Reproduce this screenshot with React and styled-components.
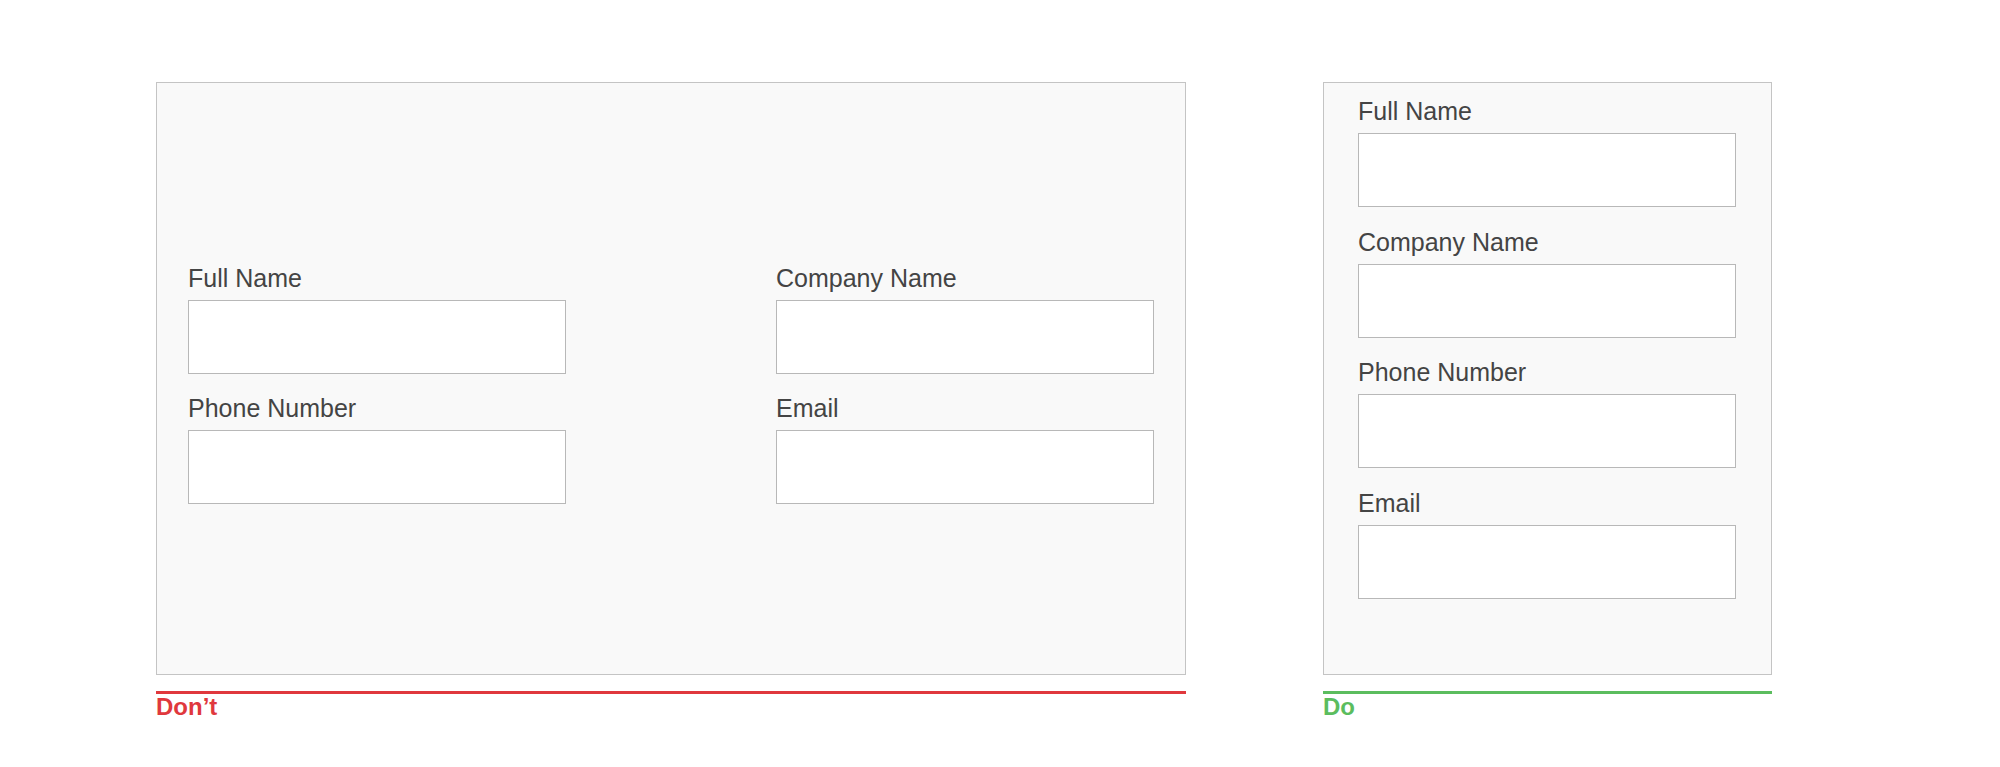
import React from "react";
import styled, { createGlobalStyle } from "styled-components";

const Global = createGlobalStyle`
  html, body { margin: 0; padding: 0; background: #ffffff; }
  body { font-family: "Liberation Sans", Arial, sans-serif; }
  * { box-sizing: border-box; }
`;

const Page = styled.div`
  display: flex;
  align-items: flex-start;
  gap: 137px;
  padding: 82px 0 0 156px;
  width: 2000px;
  height: 767px;
`;

const Example = styled.section`
  display: flex;
  flex-direction: column;
  width: ${(p) => p.$width}px;
`;

const Panel = styled.div`
  height: 593px;
  background: #f9f9f9;
  border: 1px solid #c4c4c4;
`;

const WideForm = styled.div`
  display: grid;
  grid-template-columns: 378px 378px;
  justify-content: space-between;
  row-gap: 20px;
  padding: 181px 31px 0 31px;
`;

const NarrowForm = styled.div`
  display: flex;
  flex-direction: column;
  gap: 20.5px;
  padding: 14px 35px 0 34px;
`;

const Field = styled.label`
  display: flex;
  flex-direction: column;
  gap: 8px;
`;

const Label = styled.span`
  font-size: 25px;
  line-height: 28px;
  color: #444444;
`;

const Input = styled.input`
  display: block;
  width: 378px;
  height: 74px;
  margin: 0;
  padding: 0 12px;
  background: #ffffff;
  border: 1px solid #b8b8b8;
  border-radius: 0;
  outline: none;
  font-family: inherit;
  font-size: 24px;
`;

const Rule = styled.div`
  height: 3px;
  margin-top: 16px;
  background: ${(p) => p.$color};
`;

const Caption = styled.div`
  font-size: 24px;
  line-height: 26px;
  font-weight: 700;
  color: ${(p) => p.$color};
`;

const RED = "#e0383d";
const GREEN = "#5bbd5e";

function FormField({ label }) {
  return (
    <Field>
      <Label>{label}</Label>
      <Input type="text" />
    </Field>
  );
}

export default function App() {
  return (
    <>
      <Global />
      <Page>
        <Example $width={1030}>
          <Panel>
            <WideForm>
              <FormField label="Full Name" />
              <FormField label="Company Name" />
              <FormField label="Phone Number" />
              <FormField label="Email" />
            </WideForm>
          </Panel>
          <Rule $color={RED} />
          <Caption $color={RED}>Don’t</Caption>
        </Example>
        <Example $width={449}>
          <Panel>
            <NarrowForm>
              <FormField label="Full Name" />
              <FormField label="Company Name" />
              <FormField label="Phone Number" />
              <FormField label="Email" />
            </NarrowForm>
          </Panel>
          <Rule $color={GREEN} />
          <Caption $color={GREEN}>Do</Caption>
        </Example>
      </Page>
    </>
  );
}
